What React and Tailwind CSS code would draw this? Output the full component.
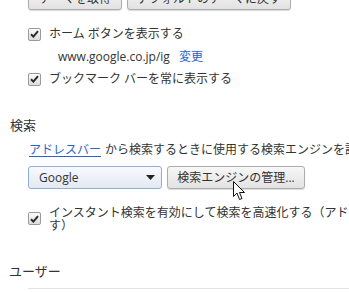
const Check = () => (
  <span className="flex h-[13px] w-[13px] shrink-0 items-center justify-center rounded-[2px] border border-[#9a9a9a] bg-gradient-to-b from-[#fdfdfd] to-[#dcdcdc]">
    <svg width="9" height="8" viewBox="0 0 9 8">
      <path d="M1 4.2 L3.4 6.6 L8 1.2" fill="none" stroke="#2b2b2b" strokeWidth="2" />
    </svg>
  </span>
);

const Cursor = () => (
  <svg className="absolute left-[233px] top-[181px]" width="13" height="20" viewBox="0 0 13 20">
    <path
      d="M0.5 0.5 L0.5 15.5 L4 12 L6.5 18.5 L9 17.5 L6.5 11.5 L11.5 11.5 Z"
      fill="#fff"
      stroke="#111"
      strokeWidth="1"
      strokeLinejoin="round"
    />
  </svg>
);

export default function App() {
  return (
    <div className="relative h-[292px] w-[349px] overflow-hidden bg-white font-['Open_Sans','Noto_Sans_CJK_JP',sans-serif] text-[12px] leading-[14px] text-[#333]">
      {/* theme buttons, mostly scrolled off */}
      <div className="-mt-[13px] flex gap-[5px] pl-[28px]">
        <button className="h-[23px] w-[94px] rounded-[3px] border border-[#acacac] bg-gradient-to-b from-[#f7f7f7] to-[#e2e2e2] text-[#333] shadow-[0_1px_1px_rgba(0,0,0,0.15)]">
          テーマを取得
        </button>
        <button className="h-[23px] w-[164px] rounded-[3px] border border-[#acacac] bg-gradient-to-b from-[#f7f7f7] to-[#e2e2e2] text-[#333] shadow-[0_1px_1px_rgba(0,0,0,0.15)]">
          デフォルトのテーマに戻す
        </button>
      </div>

      <div className="mt-[14px] flex h-[20px] items-center gap-[8px] pl-[28px]">
        <Check />
        <span>ホーム ボタンを表示する</span>
      </div>
      <div className="mt-[3px] flex h-[20px] items-center gap-[9px] pl-[58px]">
        <span>www.google.co.jp/ig</span>
        <a className="text-[#2a64c8]">変更</a>
      </div>
      <div className="mt-[2px] flex h-[20px] items-center gap-[8px] pl-[28px]">
        <Check />
        <span>ブックマーク バーを常に表示する</span>
      </div>

      {/* search */}
      <div className="mt-[26px] flex h-[20px] items-center pl-[10px] text-[13px]">検索</div>
      <div className="mt-[5px] flex h-[20px] items-center whitespace-nowrap pl-[29px]">
        <a className="text-[#2a64c8] underline underline-offset-2">アドレスバー</a>
        <span className="ml-[4px]">から検索するときに使用する検索エンジンを設定します</span>
      </div>
      <div className="mt-[6px] flex gap-[5px] pl-[28px]">
        <div className="flex h-[23px] w-[134px] items-center justify-between rounded-[3px] border border-[#8eaed6] bg-gradient-to-b from-[#f8fafd] to-[#e3e9f2] pl-[10px] pr-[6px]">
          <span>Google</span>
          <svg width="9" height="5" viewBox="0 0 9 5">
            <path d="M0 0 L9 0 L4.5 5 Z" fill="#222" />
          </svg>
        </div>
        <button className="h-[23px] w-[138px] rounded-[3px] border border-[#acacac] bg-gradient-to-b from-[#f7f7f7] to-[#e2e2e2] text-[#333] shadow-[0_1px_1px_rgba(0,0,0,0.15)]">
          検索エンジンの管理...
        </button>
      </div>

      <div className="mt-[17px] flex gap-[8px] pl-[28px]">
        <span className="mt-[6px]">
          <Check />
        </span>
        <div className="flex flex-col whitespace-nowrap leading-[13px]">
          <span>インスタント検索を有効にして検索を高速化する（アドレス バーに入力した内容が記録される場合がありま</span>
          <span>す）</span>
        </div>
      </div>

      {/* users */}
      <div className="mt-[29px] flex h-[20px] items-center pl-[9px] text-[13px]">ユーザー</div>
      <div className="ml-[28px] mt-[7px] border-t border-[#e3e3e3]" />

      <Cursor />
    </div>
  );
}
